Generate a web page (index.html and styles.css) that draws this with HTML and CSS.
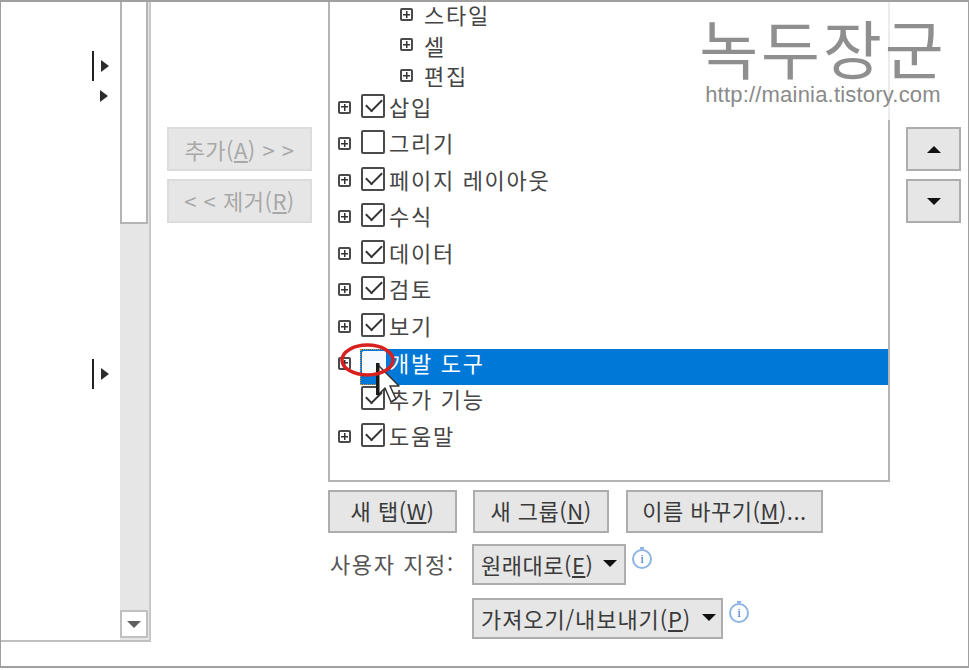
FILE: index.html
```html
<!DOCTYPE html>
<html lang="ko">
<head>
<meta charset="UTF-8">
<meta name="viewport" content="width=device-width, initial-scale=1.0">
<title>리본 사용자 지정</title>
<link rel="stylesheet" href="styles.css">
</head>
<body>

<div class="frame">
  <div class="main">

    <div class="left-list">
      <div class="markers">
        <div class="marker marker-1"><span class="bar"></span><span class="tri"></span></div>
        <div class="marker marker-2"><span class="tri"></span></div>
        <div class="marker marker-3"><span class="bar"></span><span class="tri"></span></div>
      </div>
      <div class="scrollbar">
        <div class="thumb"></div>
        <div class="track"></div>
        <div class="scroll-down"><span class="tri-down grey"></span></div>
      </div>
    </div>

    <div class="move-buttons">
      <div class="btn disabled"><span>추가(<u>A</u>) &gt; &gt;</span></div>
      <div class="btn disabled lift"><span>&lt; &lt; 제거(<u>R</u>)</span></div>
    </div>

    <div class="tree-col">
      <div class="tree">
        <div class="sub"><span class="exp"></span><span class="txt">스타일</span></div>
        <div class="sub"><span class="exp"></span><span class="txt">셀</span></div>
        <div class="sub"><span class="exp"></span><span class="txt">편집</span></div>
        <div class="row"><span class="exp"></span><span class="chk on"></span><span class="txt">삽입</span></div>
        <div class="row"><span class="exp"></span><span class="chk"></span><span class="txt">그리기</span></div>
        <div class="row"><span class="exp"></span><span class="chk on"></span><span class="txt">페이지 레이아웃</span></div>
        <div class="row"><span class="exp"></span><span class="chk on"></span><span class="txt">수식</span></div>
        <div class="row"><span class="exp"></span><span class="chk on"></span><span class="txt">데이터</span></div>
        <div class="row"><span class="exp"></span><span class="chk on"></span><span class="txt">검토</span></div>
        <div class="row"><span class="exp"></span><span class="chk on"></span><span class="txt">보기</span></div>
        <div class="row selected">
          <span class="exp"></span>
          <span class="hl"><span class="focus"><span class="chk"></span></span><span class="txt">개발 도구</span></span>
        </div>
        <div class="row"><span class="exp blank"></span><span class="chk on"></span><span class="txt">추가 기능</span></div>
        <div class="row"><span class="exp"></span><span class="chk on"></span><span class="txt">도움말</span></div>
      </div>

      <div class="tab-buttons">
        <div class="btn w-tab"><span>새 탭(<u>W</u>)</span></div>
        <div class="btn w-group"><span>새 그룹(<u>N</u>)</span></div>
        <div class="btn w-rename"><span>이름 바꾸기(<u>M</u>)...</span></div>
      </div>

      <div class="custom-row">
        <span class="custom-label">사용자 지정:</span>
        <div class="btn drop w-reset"><span>원래대로(<u>E</u>)</span><span class="tri-down"></span></div>
        <span class="info">i</span>
      </div>
      <div class="custom-row second">
        <div class="btn drop w-import"><span>가져오기/내보내기(<u>P</u>)</span><span class="tri-down"></span></div>
        <span class="info">i</span>
      </div>
    </div>

    <div class="order-buttons">
      <div class="btn small"><span class="tri-up"></span></div>
      <div class="btn small"><span class="tri-down"></span></div>
    </div>
  </div>
</div>

<!-- things pasted over the screenshot -->
<div class="watermark">
  <div class="wm-title">녹두장군</div>
  <div class="wm-url">http://mainia.tistory.com</div>
</div>

<svg class="annot" width="100" height="90" viewBox="0 0 100 90">
  <path d="M45 25 L45 55 L52 48 L58 62 L63 59 L57 46 L66 46 Z" fill="#fff" stroke="#333" stroke-width="1.5" stroke-linejoin="round"/>
  <rect x="43" y="23" width="3.5" height="32" fill="#1a1a1a"/>
  <ellipse cx="34.5" cy="20" rx="25.5" ry="15" fill="none" stroke="#d8201f" stroke-width="3.5"/>
</svg>

</body>
</html>
```

FILE: styles.css
```css
* {box-sizing: border-box;}

html, body {margin: 0; padding: 0;}

body {width: 969px;
    height: 670px;
    overflow: hidden;
    position: relative;
    background-color: #fff;
    font-family: "Noto Sans CJK KR", "Noto Sans", sans-serif;
    color: #3f3f3f;}

.frame {height: 668px;
    border: 1px solid #a0a0a0;
    border-width: 2px 1px 2px 1px;}

.main {display: flex;
    align-items: flex-start;
    height: 100%;}

/* left list */
.left-list {width: 150px;
    height: 640px;
    display: flex;
    justify-content: flex-end;
    border-right: 2px solid #c8c8c8;
    border-bottom: 2px solid #c0c0c0;}

.markers {flex: 1;}

.marker {display: flex;
    align-items: center;
    justify-content: flex-end;
    height: 30px;
    gap: 7px;}

.marker-1 {margin-top: 49px; padding-right: 11px;}
.marker-2 {padding-right: 12px;}
.marker-3 {margin-top: 248px; padding-right: 11px;}

.bar {width: 2px;
    height: 30px;
    background-color: #222;}

.tri {width: 0;
    height: 0;
    border-left: 8px solid #2b2b2b;
    border-top: 6px solid transparent;
    border-bottom: 6px solid transparent;}

.scrollbar {width: 29px;
    display: flex;
    flex-direction: column;
    background-color: #e6e6e6;}

.thumb {height: 222px;
    margin-right: 1px;
    background-color: #fff;
    border: 2px solid #b4b4b4;
    border-top: none;}

.track {flex: 1;}

.scroll-down {height: 28px;
    margin-right: 1px;
    margin-bottom: 2px;
    background-color: #fff;
    border: 2px solid #c0c0c0;
    display: flex;
    align-items: center;
    justify-content: center;}

/* buttons */
.btn {display: flex;
    align-items: center;
    justify-content: center;
    font-size: 22px;
    letter-spacing: 0.5px;
    white-space: pre;
    background-color: #e6e6e6;
    border: 2px solid #adadad;
    color: #3a3a3a;}

.btn u {text-underline-offset: 2px;}

.move-buttons {width: 145px;
    margin-left: 16px;
    margin-top: 125px;
    display: flex;
    flex-direction: column;
    gap: 8px;}

.move-buttons .btn {height: 44px;}

.move-buttons .lift {padding-bottom: 3px;}

.disabled {color: #a8a8a8;
    border-color: #dcdcdc;}

.tree-col {width: 562px;
    margin-left: 16px;}

.tree {height: 480px;
    border: 2px solid #b4b4b4;
    border-top: none;}

.sub {display: flex;
    align-items: center;
    height: 30.5px;
    padding-left: 70px;}

.sub:first-child {height: 27.5px;
    padding-bottom: 3px;}

.sub .txt {margin-left: 11px;}

.row {display: flex;
    align-items: flex-start;
    height: 36.6px;
    padding-left: 8px;
    padding-top: 1px;}

.sub + .row {margin-top: 2px;}

.row .exp {margin-top: 7px;
    margin-right: 10px;}

.exp {width: 13px;
    height: 13px;
    flex-shrink: 0;
    border: 2px solid #4a4a4a;
    border-radius: 2px;
    background:
      linear-gradient(#333, #333) center / 7px 1.5px no-repeat,
      linear-gradient(#333, #333) center / 1.5px 7px no-repeat;}

.exp.blank {border: none; background: none;}

.chk {display: block;
    width: 24px;
    height: 24px;
    flex-shrink: 0;
    border: 2px solid #4a4a4a;
    border-radius: 2px;
    background-color: #fff;
    position: relative;}

.chk.on::after {content: "";
    position: absolute;
    left: 3px;
    top: 3px;
    width: 14px;
    height: 7px;
    border-left: 2px solid #333;
    border-bottom: 2px solid #333;
    transform: rotate(-45deg);}

.txt {font-size: 22px;
    line-height: 24px;
    letter-spacing: 1.7px;
    margin-left: 4px;
    white-space: pre;
    color: #454545;}

.row.selected {padding-top: 0;}

.selected .exp {margin-top: 8px;
    margin-right: 9px;}

.selected .hl {flex: 1;
    display: flex;
    align-items: flex-start;
    height: 36px;
    background-color: #0078d7;}

.focus {width: 26px;
    height: 36px;
    padding: 1px;
    border: 1px dotted #e08a2a;}

.selected .chk {border: none;
    background-color: #f6f9fd;}

.selected .txt {color: #fff;
    margin-left: 3px;
    margin-top: 1px;}

.tab-buttons {display: flex;
    margin-top: 8px;}

.tab-buttons .btn {height: 43px;
    padding-bottom: 3px;}

.w-tab {width: 129px;}
.w-group {width: 136px; margin-left: 16px;}
.w-rename {width: 197px; margin-left: 17px;}

.custom-row {display: flex;
    align-items: center;
    margin-top: 11px;
    height: 41px;}

.custom-row.second {margin-top: 13px;
    padding-left: 144px;}

.custom-label {width: 144px;
    padding-left: 2px;
    padding-bottom: 4px;
    font-size: 22px;
    letter-spacing: 1.6px;
    color: #555;
    white-space: pre;}

.drop {height: 41px;
    justify-content: space-between;
    padding: 0 5px 2px 7px;}

.w-reset {width: 154px;
    padding-right: 7px;}

.w-import {width: 251px;
    letter-spacing: 0.9px;}

.info {position: relative;
    width: 20px;
    height: 20px;
    margin-left: 6px;
    margin-top: -11px;
    border: 2px solid #8db4e4;
    border-radius: 50%;
    color: #3c78c4;
    font: 13px/16px "Liberation Serif", serif;
    text-align: center;}

.info::before {content: "";
    position: absolute;
    left: 6px;
    top: -4px;
    width: 4px;
    height: 2px;
    background-color: #8db4e4;}

.order-buttons {margin-left: 16px;
    margin-top: 125px;
    width: 55px;
    display: flex;
    flex-direction: column;
    gap: 8px;}

.small {height: 44px;}

.tri-up, .tri-down {width: 0;
    height: 0;
    border-left: 7px solid transparent;
    border-right: 7px solid transparent;}

.tri-up {border-bottom: 7px solid #111;}

.tri-down {border-top: 7px solid #111;}

.tri-down.grey {border-top-color: #606060;}

/* watermark */
.watermark {position: absolute;
    left: 692px;
    top: 2px;
    width: 262px;
    height: 118px;
    padding-top: 8px;
    background-color: rgba(255, 255, 255, 0.75);
    text-align: center;}

.wm-title {font-size: 64px;
    line-height: 72px;
    color: #8f8f8f;
    letter-spacing: 3px;
    white-space: nowrap;}

.wm-url {font-family: "Liberation Sans", sans-serif;
    font-size: 22px;
    line-height: 26px;
    color: #8a8a8a;
    letter-spacing: 0.2px;
    white-space: nowrap;}

.annot {position: absolute;
    left: 333px;
    top: 340px;}
```
